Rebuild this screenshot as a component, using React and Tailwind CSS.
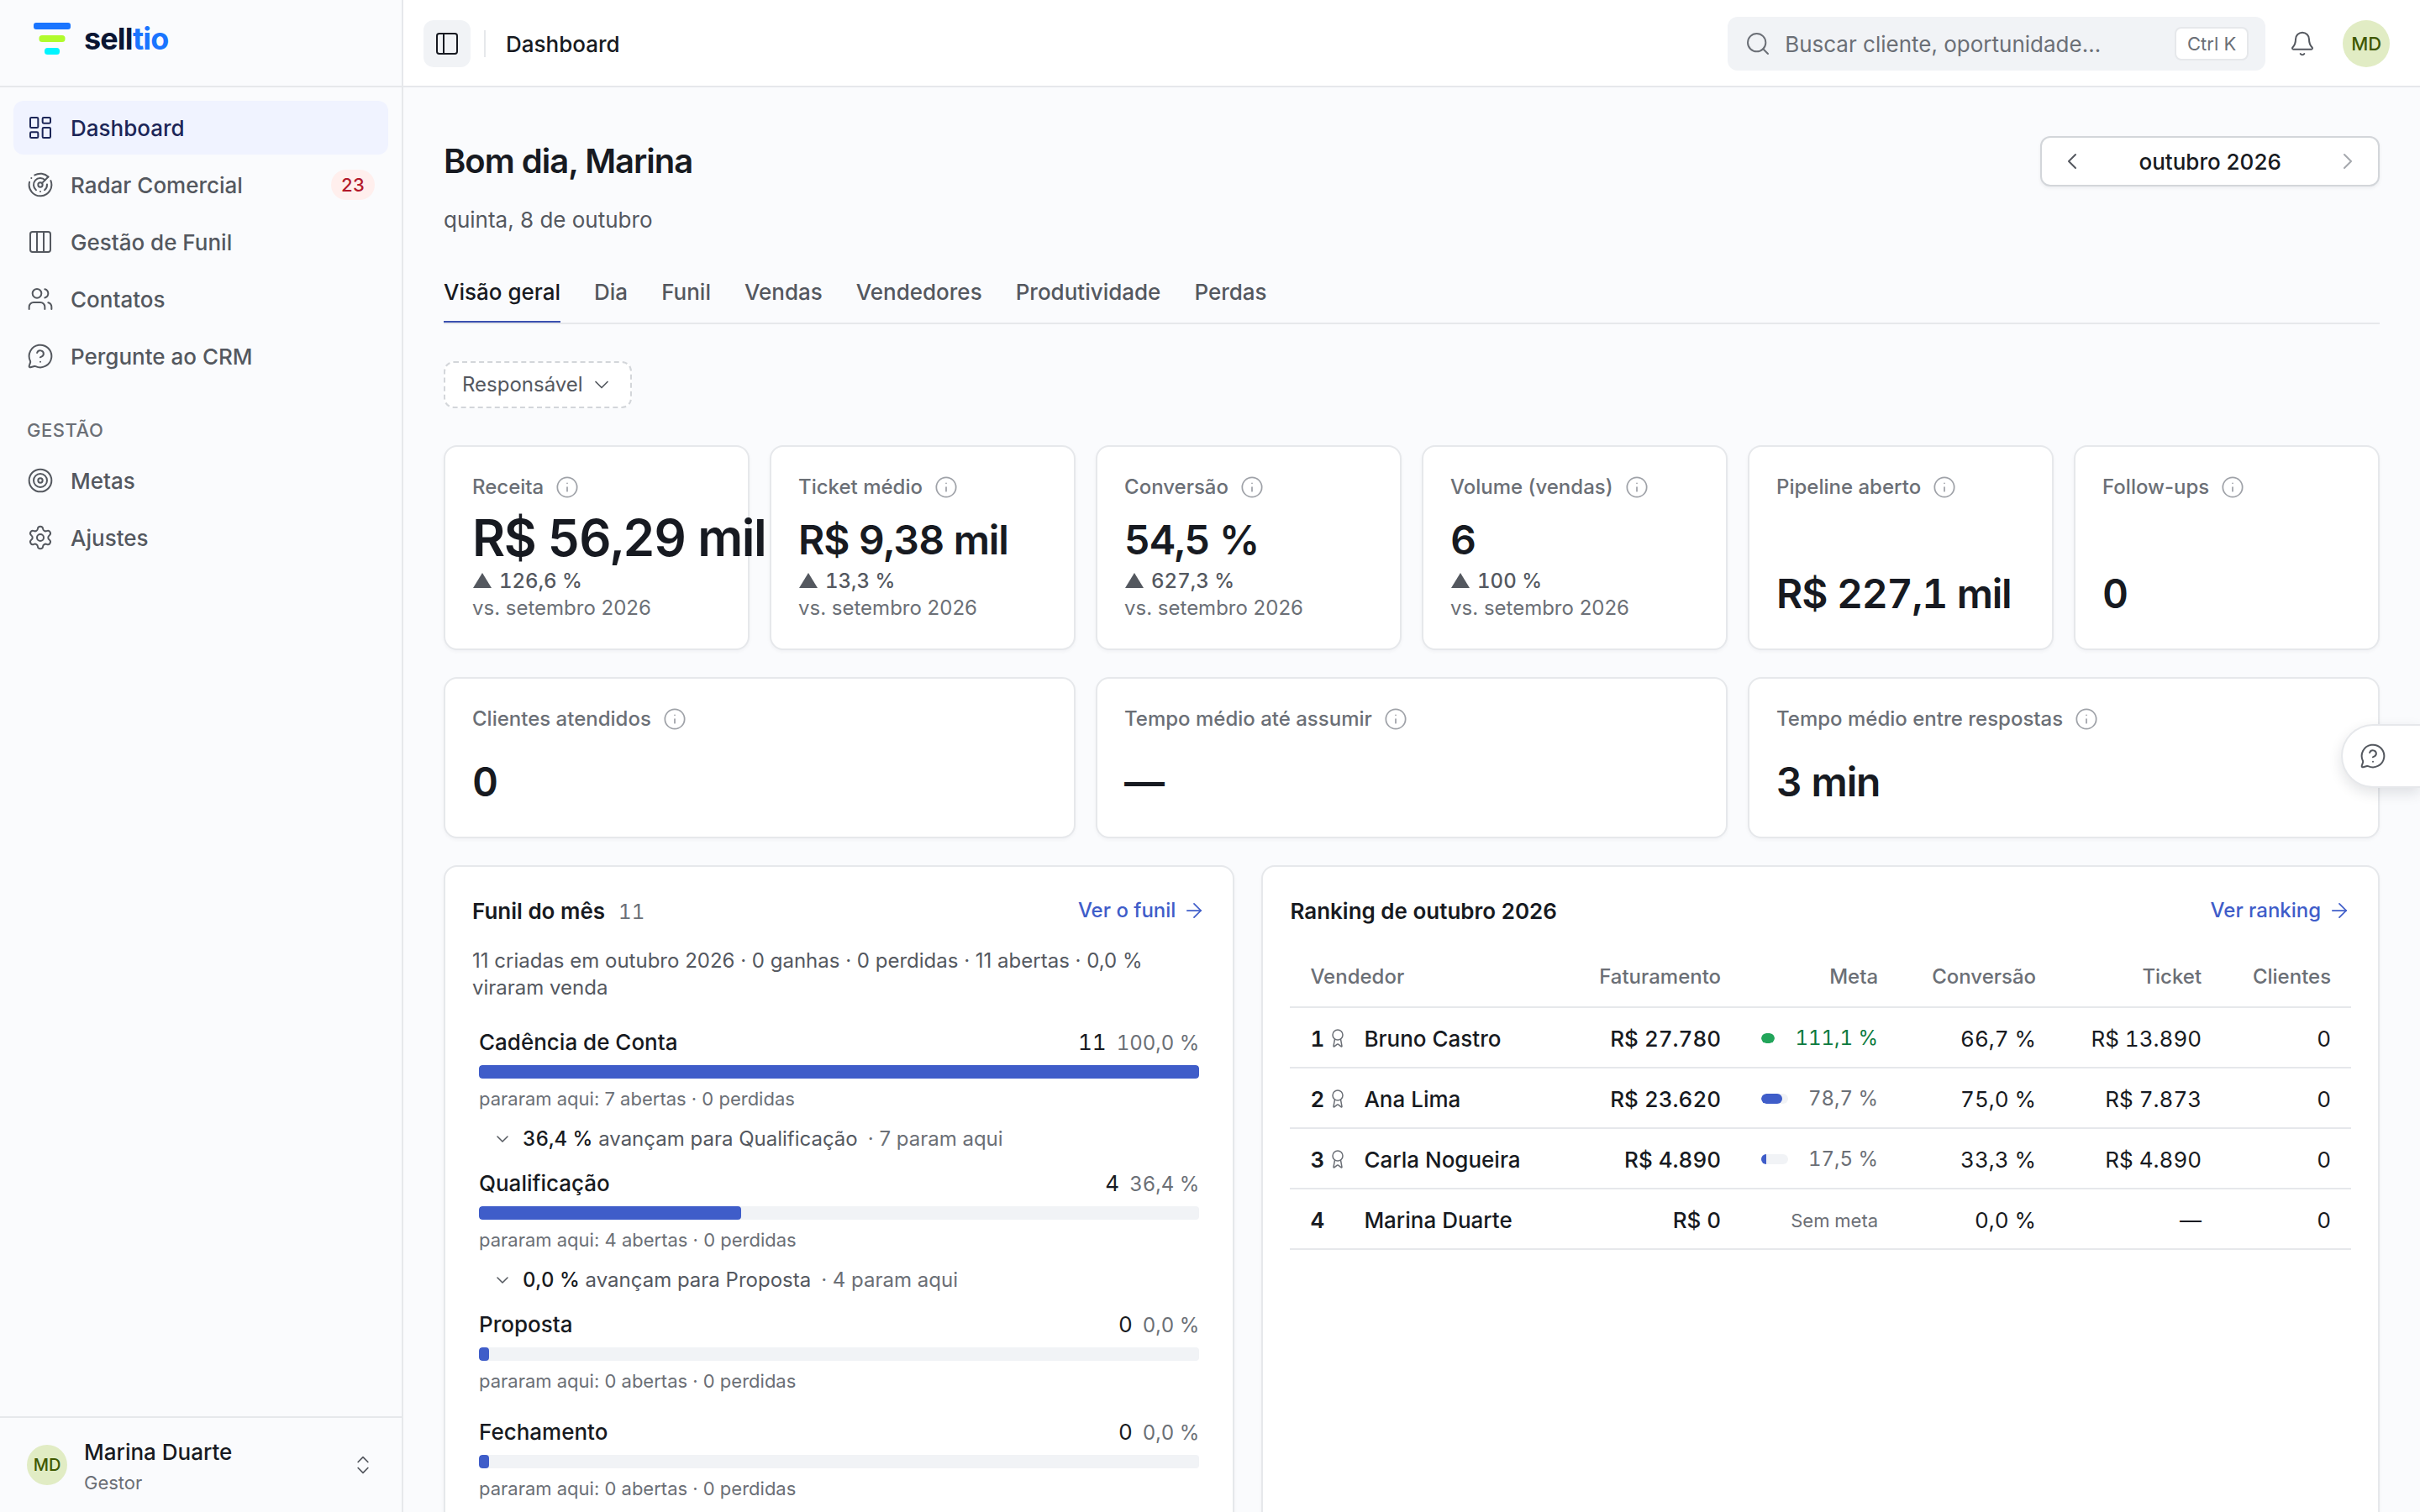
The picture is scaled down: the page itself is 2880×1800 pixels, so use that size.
import {
  ArrowRight,
  Award,
  Bell,
  ChevronDown,
  ChevronLeft,
  ChevronRight,
  ChevronsUpDown,
  Columns3,
  Info,
  LayoutDashboard,
  MessageCircleQuestionMark,
  PanelLeft,
  Radar,
  Search,
  Settings,
  Target,
  Users,
} from "lucide-react";

const mainNav = [
  { label: "Dashboard", icon: LayoutDashboard, active: true },
  { label: "Radar Comercial", icon: Radar, badge: "23" },
  { label: "Gestão de Funil", icon: Columns3 },
  { label: "Contatos", icon: Users },
  { label: "Pergunte ao CRM", icon: MessageCircleQuestionMark },
];

const managementNav = [
  { label: "Metas", icon: Target },
  { label: "Ajustes", icon: Settings },
];

const tabs = ["Visão geral", "Dia", "Funil", "Vendas", "Vendedores", "Produtividade", "Perdas"];

const kpis = [
  { label: "Receita", value: "R$ 56,29 mil", delta: "126,6 %", big: true },
  { label: "Ticket médio", value: "R$ 9,38 mil", delta: "13,3 %" },
  { label: "Conversão", value: "54,5 %", delta: "627,3 %" },
  { label: "Volume (vendas)", value: "6", delta: "100 %" },
  { label: "Pipeline aberto", value: "R$ 227,1 mil" },
  { label: "Follow-ups", value: "0" },
];

const serviceKpis = [
  { label: "Clientes atendidos", value: "0" },
  { label: "Tempo médio até assumir", value: "—" },
  { label: "Tempo médio entre respostas", value: "3 min" },
];

const stages = [
  { name: "Cadência de Conta", count: 11, share: "100,0 %", width: 100, open: 7, rate: "36,4 %", next: "Qualificação" },
  { name: "Qualificação", count: 4, share: "36,4 %", width: 36.4, open: 4, rate: "0,0 %", next: "Proposta" },
  { name: "Proposta", count: 0, share: "0,0 %", width: 1.4, open: 0 },
  { name: "Fechamento", count: 0, share: "0,0 %", width: 1.4, open: 0 },
];

const sellers = [
  { name: "Bruno Castro", revenue: "R$ 27.780", goal: 111.1, goalText: "111,1 %", conversion: "66,7 %", ticket: "R$ 13.890" },
  { name: "Ana Lima", revenue: "R$ 23.620", goal: 78.7, goalText: "78,7 %", conversion: "75,0 %", ticket: "R$ 7.873" },
  { name: "Carla Nogueira", revenue: "R$ 4.890", goal: 17.5, goalText: "17,5 %", conversion: "33,3 %", ticket: "R$ 4.890" },
  { name: "Marina Duarte", revenue: "R$ 0", conversion: "0,0 %", ticket: "—" },
];

function Logo() {
  return (
    <a href="#" className="flex items-center gap-4 text-4xl leading-10 font-bold tracking-tight text-[#0a1633]">
      <svg width="44" height="38" viewBox="0 0 44 38" aria-hidden="true">
        <rect x="0" y="0" width="44" height="8" rx="3" fill="#1a75ff" />
        <rect x="6.5" y="15" width="31" height="8" rx="3.5" fill="#b0fb2c" />
        <rect x="13" y="30" width="18" height="8" rx="3.5" fill="#00f4ff" />
      </svg>
      <span>
        sell<span className="text-[#1a75ff]">tio</span>
      </span>
    </a>
  );
}

function NavItem({ label, icon: Icon, badge, active }) {
  return (
    <li>
      <a
        href="#"
        aria-current={active ? "page" : undefined}
        className={
          "flex h-16 items-center gap-5 rounded-xl px-4 font-medium " +
          (active ? "bg-[#f0f3ff] text-[#1c2657]" : "text-[#54585f]")
        }
      >
        <Icon size={32} strokeWidth={1.5} />
        <span className="grow">{label}</span>
        {badge && (
          <span className="flex h-9 w-[52px] items-center justify-center rounded-full bg-[#ffefed] text-[22px] tabular-nums text-[#b3182a]">
            {badge}
          </span>
        )}
      </a>
    </li>
  );
}

function Sidebar() {
  return (
    <aside className="flex w-[480px] shrink-0 flex-col border-r-2 border-[#e6e8eb]">
      <div className="flex h-[104px] items-start border-b-2 border-[#e6e8eb] px-10 pt-[26px]">
        <Logo />
      </div>
      <nav className="grow p-4">
        <ul className="flex flex-col gap-1">
          {mainNav.map((item) => (
            <NavItem key={item.label} {...item} />
          ))}
        </ul>
        <h2 className="mt-10 mb-3 px-4 text-[22px] leading-8 font-medium tracking-wide text-[#6b6f76]">GESTÃO</h2>
        <ul className="flex flex-col gap-1">
          {managementNav.map((item) => (
            <NavItem key={item.label} {...item} />
          ))}
        </ul>
      </nav>
      <button type="button" className="flex h-[114px] items-center gap-5 border-t-2 border-[#e6e8eb] px-8 text-left">
        <span className="flex size-12 items-center justify-center rounded-full bg-[#e1ecc4] text-xl font-medium text-[#3f5800]">
          MD
        </span>
        <span className="grow pt-1.5">
          <span className="block leading-9 font-medium text-[#171a21]">Marina Duarte</span>
          <span className="block text-[22px] leading-9 text-[#6b6f76]">Gestor</span>
        </span>
        <ChevronsUpDown size={28} strokeWidth={1.5} className="text-[#54585f]" />
      </button>
    </aside>
  );
}

function Header() {
  return (
    <header className="flex h-[104px] shrink-0 items-center border-b-2 border-[#e6e8eb] bg-white pt-0.5 pr-9 pl-6">
      <button type="button" aria-label="Alternar menu" className="flex size-14 items-center justify-center rounded-xl bg-[#f1f3f6]">
        <PanelLeft size={32} strokeWidth={1.5} />
      </button>
      <div className="mx-4 h-8 w-0.5 bg-[#e6e8eb]" />
      <span className="ml-2 font-medium">Dashboard</span>
      <label className="ml-auto flex h-16 w-[640px] items-center gap-4 rounded-xl bg-[#f1f3f6] px-5 text-[#6b6f76]">
        <Search size={32} strokeWidth={1.5} />
        <input
          type="search"
          aria-label="Buscar"
          placeholder="Buscar cliente, oportunidade…"
          className="min-w-0 grow bg-transparent outline-none placeholder:text-[#6b6f76]"
        />
        <kbd className="flex h-10 w-[88px] items-center justify-center rounded-lg border-2 border-[#e6e8eb] bg-white font-[Inter] text-[22px]">
          Ctrl K
        </kbd>
      </label>
      <button type="button" aria-label="Notificações" className="ml-4 flex size-14 items-center justify-center text-[#54585f]">
        <Bell size={32} strokeWidth={1.5} />
      </button>
      <button type="button" className="ml-5 flex size-14 items-center justify-center rounded-full bg-[#e1ecc4] text-[22px] font-medium text-[#3f5800]">
        MD
      </button>
    </header>
  );
}

function Card({ className = "", children }) {
  return (
    <section className={"rounded-2xl border-2 border-[#e6e8eb] bg-white p-8 shadow-[0_2px_4px_rgba(20,25,40,0.04)] " + className}>
      {children}
    </section>
  );
}

function Kpi({ label, value, delta, big }) {
  return (
    <Card className="flex flex-col gap-2">
      <div className="flex h-8 items-center gap-3.5 text-2xl font-medium text-[#6b6f76]">
        {label}
        <Info size={28} strokeWidth={1.5} className="text-[#9fa2a8]" />
      </div>
      <div className="mt-auto whitespace-nowrap">
        <p
          className={
            "font-semibold tracking-tight tabular-nums " +
            (big ? "text-6xl leading-[72px]" : "text-5xl leading-[66px]")
          }
        >
          {value}
        </p>
        {delta && (
          <>
            <p className="flex items-center gap-2 text-2xl leading-8 font-medium tabular-nums text-[#54585f]">
              <svg width="24" height="20" viewBox="0 0 24 20" fill="currentColor" aria-hidden="true">
                <path d="M12 0 23 18H1z" />
              </svg>
              {delta}
            </p>
            <p className="text-2xl leading-8 text-[#6b6f76]">vs. setembro 2026</p>
          </>
        )}
      </div>
    </Card>
  );
}

function CardLink({ children }) {
  return (
    <a href="#" className="flex items-center gap-2 text-2xl font-medium text-[#3f5dc9]">
      {children}
      <ArrowRight size={28} strokeWidth={1.5} />
    </a>
  );
}

function Funnel() {
  return (
    <Card className="col-span-5">
      <div className="flex h-10 items-center justify-between">
        <h2 className="flex items-baseline gap-4 font-semibold">
          Funil do mês
          <span className="text-2xl font-normal tabular-nums text-[#6b6f76]">11</span>
        </h2>
        <CardLink>Ver o funil</CardLink>
      </div>
      <p className="mt-6 text-2xl leading-8 text-[#54585f]">
        11 criadas em outubro 2026 · 0 ganhas · 0 perdidas · 11 abertas · 0,0 % viraram venda
      </p>
      <ol className="mt-4 px-2">
        {stages.map((stage) => (
          <li key={stage.name}>
            <div className="pt-[17px] pb-3">
              <div className="flex h-8 items-baseline gap-3 leading-8">
                <span className="grow font-medium">{stage.name}</span>
                <span className="tabular-nums">{stage.count}</span>
                <span className="text-2xl leading-8 tabular-nums text-[#6b6f76]">{stage.share}</span>
              </div>
              <div className="mt-[11px] h-4 overflow-hidden rounded-sm bg-[#f1f3f6]">
                <div className="h-full rounded-sm bg-[#3f5dc9]" style={{ width: stage.width + "%" }} />
              </div>
              <p className="mt-2 text-[22px] leading-8 text-[#6b6f76]">
                pararam aqui: {stage.open} abertas · 0 perdidas
              </p>
            </div>
            {stage.next && (
              <div className="flex h-10 items-center gap-3 pl-4 text-2xl text-[#54585f]">
                <ChevronDown size={24} strokeWidth={1.5} />
                <span>
                  <span className="font-medium tabular-nums text-[#171a21]">{stage.rate}</span> avançam para {stage.next}
                </span>
                <span className="text-[#6b6f76]">· {stage.open} param aqui</span>
              </div>
            )}
          </li>
        ))}
      </ol>
    </Card>
  );
}

function Goal({ goal, text }) {
  if (goal === undefined) return <span className="text-[22px] text-[#6b6f76]">Sem meta</span>;
  const reached = goal >= 100;
  return (
    <div className="flex items-center gap-6">
      <div className="h-3 grow overflow-hidden rounded-full bg-[#f1f3f6]">
        <div
          className={"h-full " + (reached ? "bg-[#22a55a]" : "bg-[#3f5dc9]") + (goal > 50 ? " rounded-full" : "")}
          style={{ width: Math.min(goal, 100) + "%" }}
        />
      </div>
      <span className={"text-2xl " + (reached ? "text-[#0b7a3e]" : "text-[#6b6f76]")}>{text}</span>
    </div>
  );
}

function Ranking() {
  return (
    <Card className="col-span-7">
      <div className="flex h-10 items-center justify-between">
        <h2 className="font-semibold">Ranking de outubro 2026</h2>
        <CardLink>Ver ranking</CardLink>
      </div>
      <table className="mt-6 w-full table-fixed whitespace-nowrap text-right tabular-nums">
        <thead>
          <tr className="h-[71px] border-b-2 border-[#e6e8eb] text-2xl text-[#6b6f76]">
            <th className="px-6 text-left font-medium">Vendedor</th>
            <th className="w-[200px] px-6 font-medium">Faturamento</th>
            <th className="w-[187px] px-6 font-medium">Meta</th>
            <th className="w-[188px] px-6 font-medium">Conversão</th>
            <th className="w-[197px] px-6 font-medium">Ticket</th>
            <th className="w-[154px] px-6 font-medium">Clientes</th>
          </tr>
        </thead>
        <tbody>
          {sellers.map((seller, index) => (
            <tr key={seller.name} className="h-[72px] border-b-2 border-[#e6e8eb]">
              <td className="px-6 pt-0.5 text-left">
                <div className="flex items-center">
                  <span className="flex w-16 items-center gap-1 font-semibold">
                    {index + 1}
                    {index < 3 && <Award size={24} strokeWidth={1.5} className="text-[#6b6f76]" />}
                  </span>
                  <span className="font-medium">{seller.name}</span>
                </div>
              </td>
              <td className="px-6 pt-0.5 font-medium">{seller.revenue}</td>
              <td className="px-6 pt-0.5">
                <Goal goal={seller.goal} text={seller.goalText} />
              </td>
              <td className="px-6 pt-0.5">{seller.conversion}</td>
              <td className="px-6 pt-0.5">{seller.ticket}</td>
              <td className="px-6 pt-0.5">0</td>
            </tr>
          ))}
        </tbody>
      </table>
    </Card>
  );
}

export default function App() {
  return (
    <div className="flex h-screen overflow-hidden bg-[#fafbfd] font-[Inter,sans-serif] text-[26px] leading-[37px] text-[#171a21]">
      <Sidebar />
      <div className="flex min-w-0 grow flex-col">
        <Header />
        <main className="min-h-0 grow overflow-y-auto px-12 pt-14 pb-12 [scrollbar-width:none]">
          <div className="flex items-start justify-between">
            <div>
              <h1 className="text-[40px] leading-16 font-semibold tracking-tight">Bom dia, Marina</h1>
              <p className="mt-5 leading-9 text-[#54585f]">quinta, 8 de outubro</p>
            </div>
            <div className="mt-0.5 flex h-[60px] w-[404px] items-center justify-between rounded-xl border-2 border-[#d3d6da] bg-white px-2 shadow-[0_2px_4px_rgba(20,25,40,0.06)]">
              <button type="button" aria-label="Mês anterior" className="flex size-14 items-center justify-center text-[#54585f]">
                <ChevronLeft size={32} strokeWidth={1.5} />
              </button>
              <span className="font-medium">outubro 2026</span>
              <button type="button" aria-label="Próximo mês" disabled className="flex size-14 items-center justify-center text-[#a6a9ae]">
                <ChevronRight size={32} strokeWidth={1.5} />
              </button>
            </div>
          </div>

          <div role="tablist" className="mt-[38px] flex gap-10 border-b-2 border-[#e6e8eb]">
            {tabs.map((tab, index) => (
              <button
                key={tab}
                type="button"
                role="tab"
                aria-selected={index === 0}
                className={
                  "h-[66px] border-b-2 pb-1 leading-9 font-medium " +
                  (index === 0 ? "border-[#3a50b0]" : "border-transparent text-[#54585f]")
                }
              >
                {tab}
              </button>
            ))}
          </div>

          <button
            type="button"
            className="mt-11 flex h-14 items-center gap-2 rounded-xl border-2 border-dashed border-[#d3d6da] bg-white px-5 text-2xl text-[#54585f]"
          >
            Responsável
            <ChevronDown size={28} strokeWidth={1.5} />
          </button>

          <div className="mt-11 grid grid-cols-6 gap-6">
            {kpis.map((kpi) => (
              <Kpi key={kpi.label} {...kpi} />
            ))}
          </div>
          <div className="mt-8 grid auto-rows-[192px] grid-cols-3 gap-6">
            {serviceKpis.map((kpi) => (
              <Kpi key={kpi.label} {...kpi} />
            ))}
          </div>
          <div className="mt-8 grid grid-cols-12 gap-8">
            <Funnel />
            <Ranking />
          </div>
        </main>
      </div>
      <button
        type="button"
        aria-label="Ajuda"
        className="fixed top-1/2 right-0 flex h-19 w-[94px] -translate-y-1/2 items-center rounded-l-full border-2 border-r-0 border-[#e6e8eb] bg-white pl-5 text-[#54585f] shadow-[0_6px_16px_rgba(20,25,40,0.12)]"
      >
        <MessageCircleQuestionMark size={32} strokeWidth={1.5} />
      </button>
    </div>
  );
}
